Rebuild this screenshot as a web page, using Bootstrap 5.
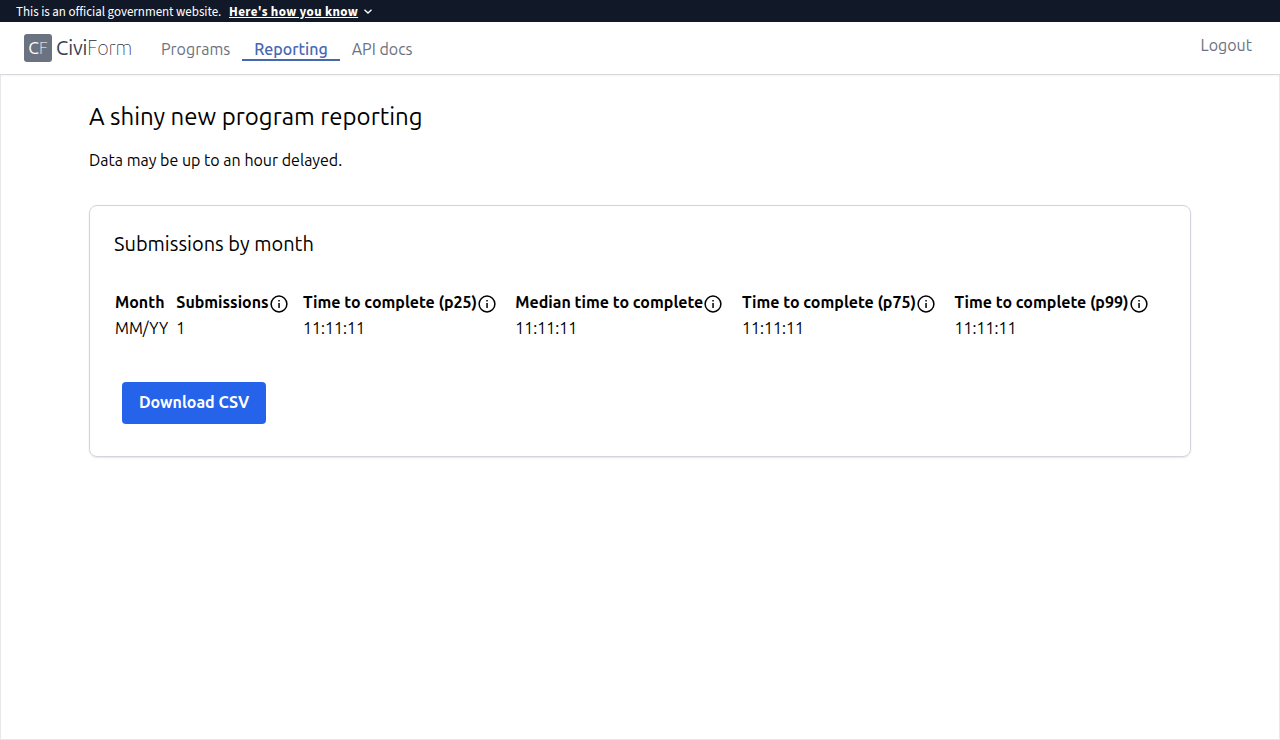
<!DOCTYPE html>
<html lang="en">
<head>
<meta charset="utf-8">
<meta name="viewport" content="width=device-width, initial-scale=1">
<title>A shiny new program reporting</title>
<link href="https://cdn.jsdelivr.net/npm/bootstrap@5.3.0/dist/css/bootstrap.min.css" rel="stylesheet">
<style>
body{font:400 16px/24px Ubuntu,"Noto Sans",sans-serif;color:#000;background:#fff;white-space:nowrap}
.gov-banner{height:22px;padding-left:16px;background:#111827;color:#fff;font:13px/22px "Source Sans 3","Noto Sans CJK JP",sans-serif}
.gov-text{width:213px;letter-spacing:-.03px}
.gov-text,.gov-link{padding-top:2px}
.gov-link{color:#fff;letter-spacing:.37px}
.site-header{height:52px;padding:0 28px 0 24px;background:#fff;box-shadow:0 1px 3px rgba(0,0,0,.05),0 1px 2px rgba(0,0,0,.05);z-index:1;color:#6b7280}
.logo-mark{width:28px;height:28px;border-radius:3px;background:#6b7280;color:#fff;font-size:17.5px;line-height:28px;font-weight:400}
.thin{font-weight:100}
.logo-name{font-size:20px;line-height:28px;margin-left:4px;width:81px;color:#374151;font-weight:400;letter-spacing:-.1px}
.logo-name .thin{color:#1f2937}
.tab-link{height:24px;padding:0 12px;color:#6b7280;text-decoration:none;line-height:24px}
.tab-link.current{color:#4668b3;font-weight:500;border-bottom:2px solid #4668b3}
.page-area{height:666px;border:1px solid #e5e7eb;padding:0 88px}
.page-title{font-size:24px;line-height:32px;font-weight:400;margin:26px 0 0}
.page-note{margin:15px 0 0}
.report-card{margin-top:33px;height:252px;border:1px solid #d1d5db;border-radius:8px;padding:24px;box-shadow:0 1px 2px rgba(0,0,0,.1)}
.report-title{font-size:20px;line-height:28px;font-weight:400;margin:0 0 31px}
.report-table{width:1052px;table-layout:fixed}
.report-table th,.report-table td{padding:0 1px}
.report-table th{font-weight:700;height:26px;vertical-align:top;padding-top:1px}
.info-icon{width:20px;height:20px;margin-top:4px;flex:none}
.report-table td{height:26px}
.csv-btn{width:144px;height:42px;margin:41px 0 0 8px;padding:0 0 2px;border:0;border-radius:4px;background:#2563eb;color:#fff;font-size:16px;font-weight:700}
</style>
</head>
<body>
<svg class="d-none"><symbol id="info" viewBox="0 0 20 20"><circle cx="10" cy="10" r="7.9" fill="none" stroke="#000" stroke-width="1.5"/><path d="M9.3 9h1.5v5H9.3zM9.3 6h1.5v1.6H9.3z"/></symbol></svg>
<div class="gov-banner d-flex align-items-center">
  <span class="gov-text">This is an official government website.</span>
  <a class="gov-link fw-bold text-decoration-underline" href="#">Here's how you know</a>
  <svg class="ms-1" width="12" height="12" viewBox="0 0 12 12" fill="none" stroke="#fff" stroke-width="1.3"><path d="M2.5 4.7 6 8l3.5-3.3"/></svg>
</div>
<header class="site-header position-relative d-flex align-items-start">
  <div class="d-flex mt-2 pt-1">
    <span class="logo-mark text-center">C<span class="thin">F</span></span>
    <span class="logo-name">Civi<span class="thin">Form</span></span>
  </div>
  <nav class="d-flex" style="margin:15px 0 0 12px">
    <a class="tab-link" href="#">Programs</a>
    <a class="tab-link current" href="#">Reporting</a>
    <a class="tab-link" href="#">API docs</a>
  </nav>
  <a class="ms-auto text-reset text-decoration-none" style="margin-top:11px" href="#">Logout</a>
</header>
<main class="page-area">
  <h1 class="page-title">A shiny new program reporting</h1>
  <p class="page-note">Data may be up to an hour delayed.</p>
  <section class="report-card">
    <h2 class="report-title">Submissions by month</h2>
    <table class="report-table">
      <colgroup><col style="width:61.3px"><col style="width:126.7px"><col style="width:212.3px"><col style="width:226.7px"><col style="width:212.5px"><col></colgroup>
      <thead><tr>
        <th>Month</th>
        <th><div class="d-flex"><span>Submissions</span><svg class="info-icon"><use href="#info"/></svg></div></th>
        <th><div class="d-flex"><span>Time to complete (p25)</span><svg class="info-icon"><use href="#info"/></svg></div></th>
        <th><div class="d-flex"><span>Median time to complete</span><svg class="info-icon"><use href="#info"/></svg></div></th>
        <th><div class="d-flex"><span>Time to complete (p75)</span><svg class="info-icon"><use href="#info"/></svg></div></th>
        <th><div class="d-flex"><span>Time to complete (p99)</span><svg class="info-icon"><use href="#info"/></svg></div></th>
      </tr></thead>
      <tbody><tr><td>MM/YY</td><td>1</td><td>11:11:11</td><td>11:11:11</td><td>11:11:11</td><td>11:11:11</td></tr></tbody>
    </table>
    <button class="btn csv-btn" type="button">Download CSV</button>
  </section>
</main>
<script src="https://cdn.jsdelivr.net/npm/bootstrap@5.3.0/dist/js/bootstrap.bundle.min.js"></script>
</body>
</html>
